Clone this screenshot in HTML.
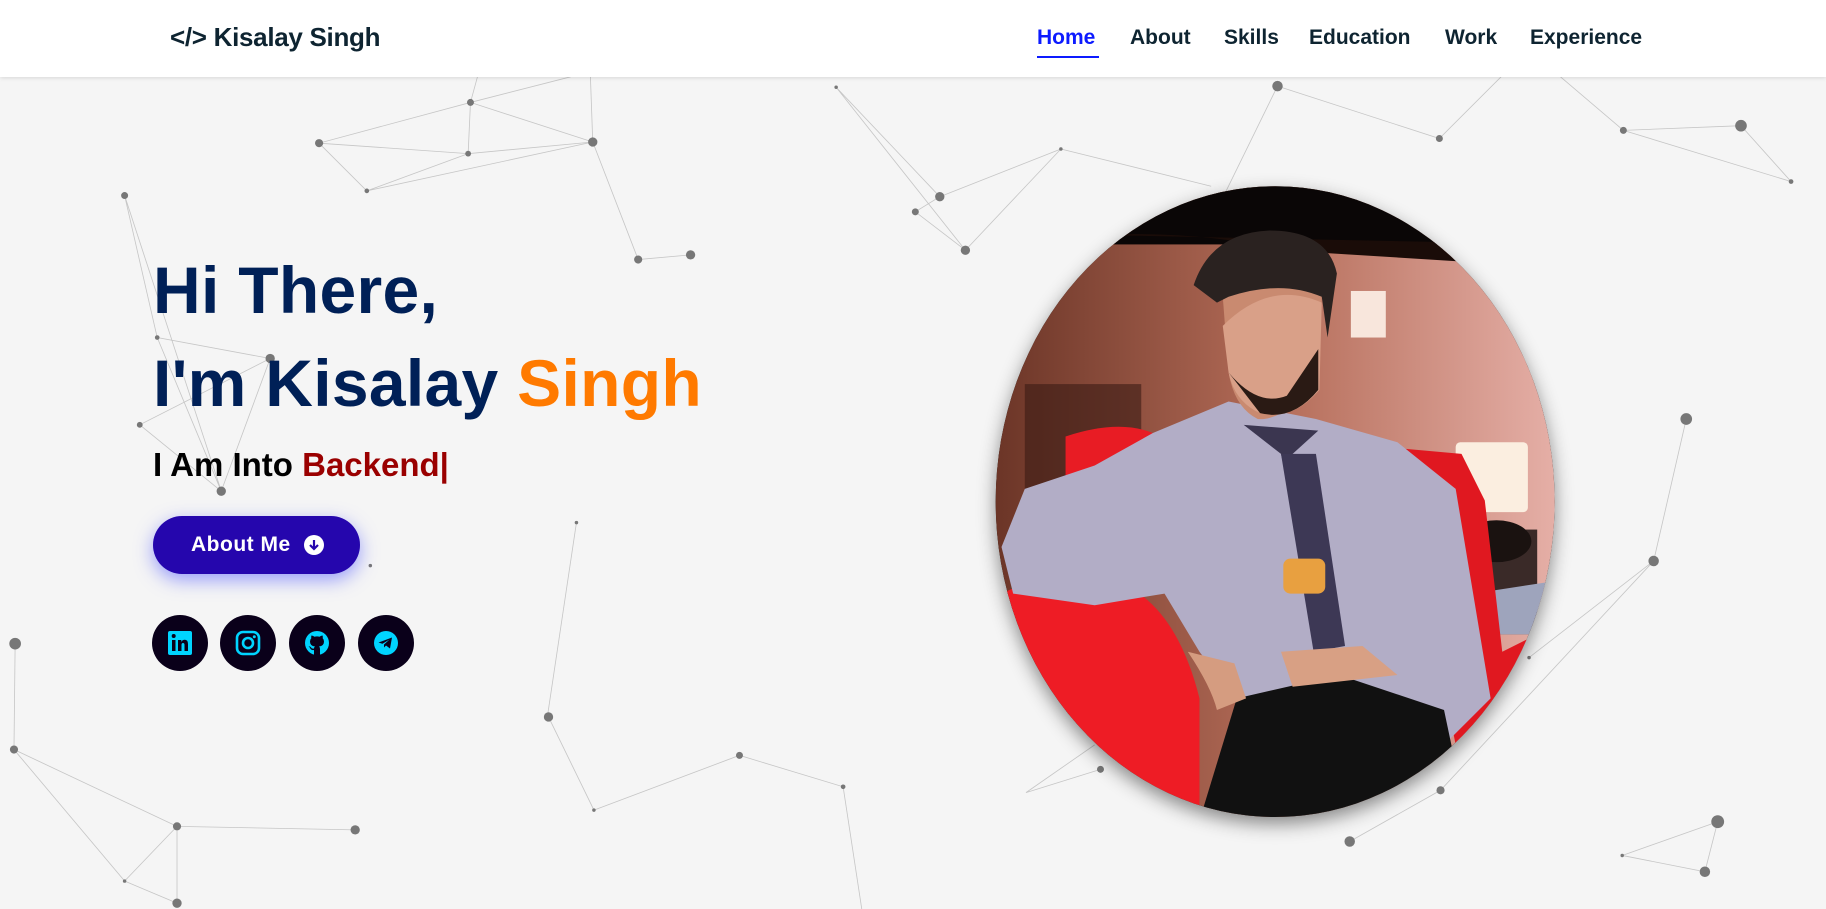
<!DOCTYPE html>
<html><head><meta charset="utf-8"><style>
*{margin:0;padding:0;box-sizing:border-box}
body{width:1826px;height:909px;overflow:hidden;background:#f5f5f5;font-family:"Liberation Sans",sans-serif;position:relative}
#bg{position:absolute;left:0;top:0;width:1826px;height:909px}
nav{position:absolute;left:0;top:0;width:1826px;height:77px;background:#fff;box-shadow:0 1px 4px rgba(0,0,0,.12);z-index:2}
.logo{position:absolute;left:170px;top:22px;font-size:26px;font-weight:bold;color:#0e2431;letter-spacing:-0.3px}
.menu{position:absolute;top:26px;font-size:21px;font-weight:bold;color:#0e2431}
.menu span{position:absolute;white-space:nowrap}
.home{color:#0d1bff}
.uline{position:absolute;left:1037px;top:56px;width:62px;height:2px;background:#0d1bff}
h1{position:absolute;left:153px;font-size:66px;font-weight:bold;color:#002057;white-space:nowrap;letter-spacing:0.3px}
.or{color:#ff7a00}
.into{position:absolute;left:153px;top:446px;font-size:33px;font-weight:bold;color:#000;white-space:nowrap}
.into b{color:#9a0000}
.btn{position:absolute;left:153px;top:516px;width:207px;height:58px;border-radius:30px;background:#2506ad;box-shadow:0 6px 18px rgba(60,70,255,.5);color:#fff;font-size:21px;font-weight:bold;line-height:58px;padding-left:38px;letter-spacing:.5px}
.btn i{position:absolute;display:block;left:151px;top:19px;width:20px;height:20px;border-radius:50%;background:#fff;line-height:0}
.btn i svg{display:block}
.soc{position:absolute;top:615px;width:56px;height:56px;border-radius:50%;background:#0a001a}
.soc svg{position:absolute;left:15px;top:15px}
</style></head><body>
<svg id="bg" viewBox="0 0 1568 781" preserveAspectRatio="none">
<g stroke="#b5b5b5" stroke-width=".7" fill="none" opacity=".75">
<path d="M404 88L402 132L509 122L404 88L274 123L315 164L402 132L274 123M509 122L548 223L593 219M509 122L507 66M404 88L410 66M404 88L490 66M315 164L509 122M107 168L135 290L232 308L120 365L190 422L135 290M232 308L190 422M107 168L190 422M495 449L470 616M13 553L12 644L107 757L152 710L152 776L107 757M152 710L305 713M12 644L152 710M471 616L510 696L635 649L724 676L740 781M718 75L807 169L786 182L829 215L911 128L807 169M718 75L829 215M911 128L1040 160M1097 74L1050 170M1097 74L1236 119L1289 66M1340 66L1394 112L1495 108L1538 156M1394 112L1538 156M1448 360L1420 482L1313 565M1420 482L1237 679L1159 723M945 661L881 681M940 640L881 681M1475 706L1464 749L1393 735L1475 706"/>
</g>
<g fill="#777">
<circle cx="404" cy="88" r="3"/><circle cx="402" cy="132" r="2.5"/><circle cx="509" cy="122" r="4"/><circle cx="274" cy="123" r="3.5"/><circle cx="315" cy="164" r="2"/><circle cx="548" cy="223" r="3.5"/><circle cx="593" cy="219" r="4"/><circle cx="107" cy="168" r="3"/><circle cx="135" cy="290" r="2"/><circle cx="232" cy="308" r="4"/><circle cx="120" cy="365" r="2.5"/><circle cx="190" cy="422" r="4"/><circle cx="495" cy="449" r="1.5"/><circle cx="318" cy="486" r="1.5"/><circle cx="13" cy="553" r="5"/><circle cx="12" cy="644" r="3.5"/><circle cx="152" cy="710" r="3.5"/><circle cx="107" cy="757" r="1.5"/><circle cx="152" cy="776" r="4"/><circle cx="305" cy="713" r="4"/><circle cx="471" cy="616" r="4"/><circle cx="510" cy="696" r="1.5"/><circle cx="635" cy="649" r="3"/><circle cx="724" cy="676" r="2"/><circle cx="718" cy="75" r="1.5"/><circle cx="807" cy="169" r="4"/><circle cx="786" cy="182" r="3"/><circle cx="829" cy="215" r="4"/><circle cx="911" cy="128" r="1.5"/><circle cx="1097" cy="74" r="4.5"/><circle cx="1236" cy="119" r="3"/><circle cx="1394" cy="112" r="3"/><circle cx="1495" cy="108" r="5"/><circle cx="1538" cy="156" r="2"/><circle cx="1448" cy="360" r="5"/><circle cx="1420" cy="482" r="4.5"/><circle cx="1313" cy="565" r="1.5"/><circle cx="1237" cy="679" r="3.5"/><circle cx="1159" cy="723" r="4.5"/><circle cx="945" cy="661" r="3"/><circle cx="1475" cy="706" r="5.5"/><circle cx="1464" cy="749" r="4.5"/><circle cx="1393" cy="735" r="1.5"/>
</g>
<defs>
<clipPath id="c"><ellipse cx="1095" cy="431" rx="240" ry="271"/></clipPath>
<linearGradient id="bk" x1="0" y1="0" x2="1" y2="0"><stop offset="0" stop-color="#6a3426"/><stop offset=".5" stop-color="#b46c58"/><stop offset="1" stop-color="#e6b0a8"/></linearGradient>
<filter id="sh" x="-20%" y="-20%" width="140%" height="140%"><feDropShadow dx="0" dy="6" stdDeviation="8" flood-opacity=".45"/></filter>
</defs>
<ellipse cx="1095" cy="431" rx="240" ry="271" fill="#000" filter="url(#sh)"/>
<g clip-path="url(#c)">
<rect x="850" y="160" width="490" height="545" fill="url(#bk)"/>
<rect x="850" y="160" width="490" height="50" fill="#0a0606"/>
<path d="M850 210Q1000 190 1100 215L1340 230L1340 210L850 200Z" fill="#1a0c08"/>
<rect x="880" y="330" width="100" height="100" fill="#3a1a14" opacity=".6"/>
<rect x="1250" y="380" width="62" height="60" fill="#fbeee0" rx="4"/>
<rect x="1160" y="250" width="30" height="40" fill="#f8e6dc"/>
<rect x="1250" y="455" width="70" height="90" fill="#3a2a28"/>
<ellipse cx="1285" cy="465" rx="30" ry="18" fill="#1a1210"/>
<path d="M1265 510L1330 500L1330 545L1260 545Z" fill="#9ea4bc"/>
<path d="M1200 385L1255 390L1275 430L1290 560L1320 545L1330 620L1250 640Z" fill="#e01820"/>
<path d="M915 375Q960 360 990 372L990 470L915 490Z" fill="#e81c24"/>
<path d="M860 510Q900 490 960 500Q1010 520 1030 600L1030 705L870 705Z" fill="#ee1c25"/>
<path d="M990 372L1055 345L1130 360L1200 380L1250 420L1280 600L1240 640L1160 600L1060 600L1030 560L1000 510L940 520L870 510L860 470L880 420L940 400Z" fill="#b2adc6"/>
<path d="M1062 600L1150 580L1240 610L1260 705L1030 705Z" fill="#111"/>
<path d="M1068 365L1132 370L1110 390L1150 555L1138 560L1100 390Z" fill="#3b3650"/>
<path d="M1100 390L1130 390L1155 555L1128 560Z" fill="#3d3855"/>
<rect x="1102" y="480" width="36" height="30" rx="6" fill="#e8a040"/>
<path d="M1055 320Q1060 350 1080 360Q1100 362 1132 330L1135 250Q1100 240 1050 255Z" fill="#c98a70"/>
<path d="M1050 280Q1090 240 1135 260L1133 335Q1110 362 1082 355Q1060 345 1055 320Z" fill="#d9a088"/>
<path d="M1055 320Q1080 350 1105 340L1132 300L1132 335Q1110 362 1082 355Z" fill="#2a1a14"/>
<path d="M1025 245Q1040 200 1090 198Q1140 198 1148 235L1140 290L1135 255Q1100 240 1055 255L1045 260Z" fill="#2a2220"/>
<path d="M1020 560Q1040 590 1045 610L1070 600L1060 570Z" fill="#d59c80"/>
<path d="M1100 560L1170 555L1200 580L1110 590Z" fill="#d8a084"/>
</g>
</svg>
<nav>
<div class="logo">&lt;/&gt; Kisalay Singh</div>
<div class="menu">
<span class="home" style="left:1037px">Home</span>
<span style="left:1130px">About</span>
<span style="left:1224px">Skills</span>
<span style="left:1309px">Education</span>
<span style="left:1445px">Work</span>
<span style="left:1530px">Experience</span>
</div>
<div class="uline"></div>
</nav>
<h1 style="top:252px">Hi There,</h1>
<h1 style="top:345px">I'm Kisalay <span class="or">Singh</span></h1>
<div class="into">I Am Into <b>Backend|</b></div>
<div class="btn">About Me<i><svg width="20" height="20" viewBox="0 0 20 20"><path d="M10 5V14M6 10L10 14L14 10" stroke="#2506ad" stroke-width="2.2" fill="none"/></svg></i></div>
<div class="soc" style="left:152px"><svg width="26" height="26" viewBox="0 0 26 26"><rect x="1" y="1" width="24" height="24" rx="2" fill="#00d4ff"/><rect x="5" y="10" width="3.5" height="11" fill="#0a001a"/><circle cx="6.7" cy="6" r="2" fill="#0a001a"/><path d="M11 10H14.3V12Q15.5 9.7 18 9.8Q21 10 21 14V21H17.5V15Q17.5 13 16 13Q14.5 13 14.5 15V21H11Z" fill="#0a001a"/></svg></div>
<div class="soc" style="left:220px"><svg width="26" height="26" viewBox="0 0 26 26"><rect x="2" y="2" width="22" height="22" rx="6" fill="none" stroke="#00d4ff" stroke-width="2.6"/><circle cx="13" cy="13" r="5" fill="none" stroke="#00d4ff" stroke-width="2.6"/><circle cx="19.3" cy="6.7" r="1.5" fill="#00d4ff"/></svg></div>
<div class="soc" style="left:289px"><svg width="26" height="26" viewBox="0 0 26 26"><circle cx="13" cy="13" r="12" fill="#00d4ff"/><path d="M10 25V20Q7 20.5 6 18Q5.5 16.8 4.5 16.5Q6 16 7 17.5Q8 19 10 18.5Q10 17 11 16.5Q6 16 6 11.5Q6 9.5 7.3 8.3Q7 7 7.4 5.5Q9 5.5 10.5 6.8Q13 6 15.5 6.8Q17 5.5 18.6 5.5Q19 7 18.7 8.3Q20 9.5 20 11.5Q20 16 15 16.5Q16 17.2 16 19V25Z" fill="#0a001a"/></svg></div>
<div class="soc" style="left:358px"><svg width="26" height="26" viewBox="0 0 26 26"><circle cx="13" cy="13" r="12" fill="#00d4ff"/><path d="M5.5 12.5L19 7.5L17 18.5L13 15.5L11 17.5L11 14.5L16.5 9.5L9.5 13.8Z" fill="#0a001a"/></svg></div>
</body></html>
